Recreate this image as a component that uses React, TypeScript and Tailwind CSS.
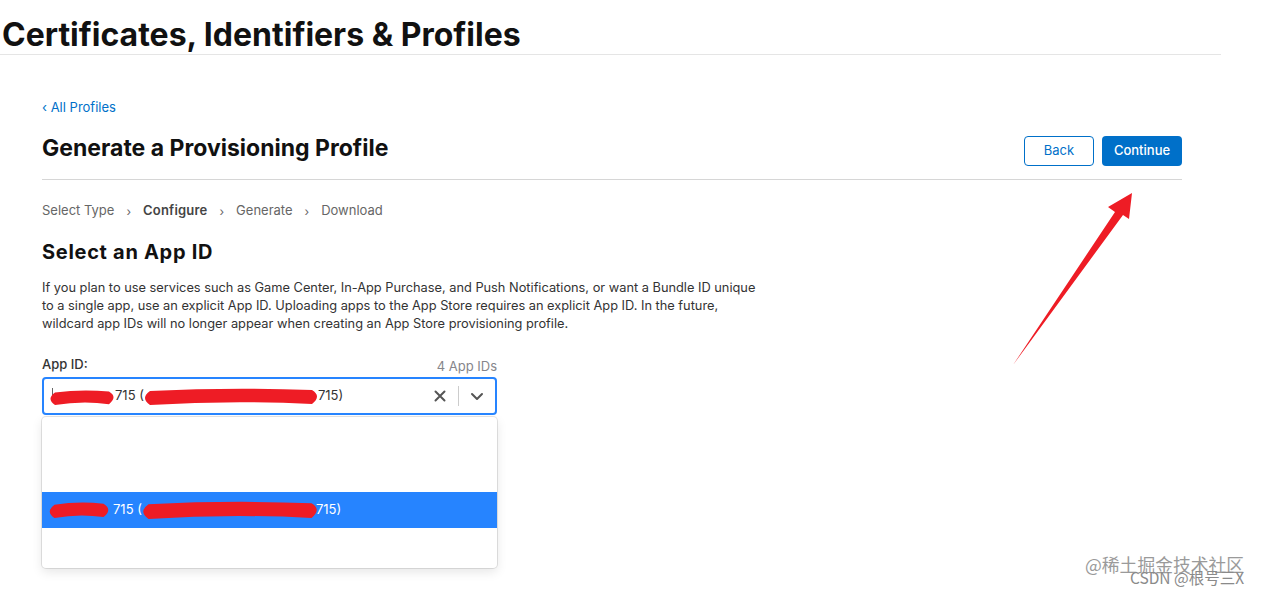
import React from "react";

const Blob = ({ className, w, h }: { className: string; w: number; h: number }) => (
  <svg className={className} width={w} height={h} viewBox={`0 0 ${w} ${h}`}>
    <path
      d={`M${h / 2} ${h * 0.25} Q${w * 0.5} ${h * 0.05} ${w - h / 2} ${h * 0.2} Q${w} ${h * 0.5} ${w - h / 2} ${h * 0.9} Q${w * 0.5} ${h * 0.7} ${h / 2} ${h * 0.95} Q0 ${h * 0.6} ${h / 2} ${h * 0.25} Z`}
      fill="#ee1c25"
    />
  </svg>
);

export default function App() {
  return (
    <div className="relative w-[1263px] h-[594px] bg-white overflow-hidden font-['Inter',sans-serif] text-[#1d1d1f]">
      <div className="w-[1221px] border-b border-[#e5e5e5] pl-[2px] pt-[16px] pb-[0px]">
        <h1 className="text-[32px] leading-[38px] font-bold text-[#111]">
          Certificates, Identifiers &amp; Profiles
        </h1>
      </div>

      <div className="ml-[42px] w-[1140px] pt-[44px]">
        <a className="block text-[13px] leading-[16px] text-[#0070c9]">‹ All Profiles</a>
        <div className="flex items-center justify-between mt-[14px] pb-[13px] border-b border-[#d6d6d6]">
          <h2 className="text-[23px] leading-[30px] font-bold text-[#111]">Generate a Provisioning Profile</h2>
          <div className="flex gap-[8px] mt-[7px]">
            <button className="w-[70px] h-[30px] rounded-[4px] border border-[#0070c9] text-[13px] text-[#0070c9] bg-white">
              Back
            </button>
            <button className="w-[80px] h-[30px] rounded-[4px] bg-[#0070c9] text-[13px] font-medium text-white">
              Continue
            </button>
          </div>
        </div>

        <div className="flex items-center mt-[22px] text-[13px] leading-[16px] text-[#666]">
          <span>Select Type</span>
          <span className="mx-[12px] text-[12px] translate-y-[2px]">›</span>
          <span className="font-semibold text-[#444] tracking-[0.2px]">Configure</span>
          <span className="mx-[12px] text-[12px] translate-y-[2px]">›</span>
          <span>Generate</span>
          <span className="mx-[12px] text-[12px] translate-y-[2px]">›</span>
          <span>Download</span>
        </div>

        <h3 className="mt-[21px] text-[20px] leading-[26px] font-bold tracking-[0.7px] text-[#111]">Select an App ID</h3>

        <p className="mt-[14px] w-[716px] text-[12.8px] leading-[18px] text-[#333]">
          If you plan to use services such as Game Center, In-App Purchase, and Push Notifications, or want a Bundle ID unique to
          a single app, use an explicit App ID. Uploading apps to the App Store requires an explicit App ID. In the future,
          wildcard app IDs will no longer appear when creating an App Store provisioning profile.
        </p>

        <div className="w-[455px] mt-[23px]">
          <div className="flex items-end justify-between text-[13px] leading-[16px]">
            <span className="font-medium text-[#333]">App ID:</span>
            <span className="text-[#86868b] translate-y-[2px]">4 App IDs</span>
          </div>
          <div className="relative mt-[5px] h-[38px] rounded-[4px] border-2 border-[#2684ff] flex items-center">
            <div className="flex-1 relative h-full flex items-center text-[13px] text-[#333]">
              <span className="absolute left-[8px] top-[9px] w-px h-[12px] bg-[#666]" />
              <span className="pl-[71px]">715 (</span>
              <span className="w-[174px]" />
              <span>715)</span>
              <Blob className="absolute left-[2px] top-[9px]" w={72} h={18} />
              <Blob className="absolute left-[96px] top-[7px]" w={182} h={20} />
            </div>
            <div className="flex items-center h-full">
              <svg width="20" height="20" viewBox="0 0 20 20" className="mr-[8px]">
                <path d="M5.5 5.5 L14.5 14.5 M14.5 5.5 L5.5 14.5" stroke="#555" strokeWidth="2" strokeLinecap="round" />
              </svg>
              <span className="w-px h-[20px] bg-[#ccc]" />
              <svg width="20" height="20" viewBox="0 0 20 20" className="mx-[8px]">
                <path d="M5 8 L10 13 L15 8" stroke="#555" strokeWidth="2" fill="none" strokeLinecap="round" strokeLinejoin="round" />
              </svg>
            </div>
          </div>
          <div className="mt-[2px] h-[151px] rounded-[4px] bg-white shadow-[0_0_0_1px_rgba(0,0,0,0.1),0_4px_11px_rgba(0,0,0,0.1)] py-[3px] flex flex-col">
            <div className="h-[36px]" />
            <div className="h-[36px]" />
            <div className="relative h-[36px] bg-[#2684ff] flex items-center text-[13px] text-white">
              <span className="pl-[71px]">715 (</span>
              <span className="w-[174px]" />
              <span>715)</span>
              <Blob className="absolute left-[3px] top-[8px]" w={68} h={19} />
              <Blob className="absolute left-[96px] top-[7px]" w={184} h={21} />
            </div>
            <div className="h-[36px]" />
          </div>
        </div>
      </div>

      <svg className="absolute left-[1005px] top-[185px]" width="135" height="185" viewBox="0 0 135 185">
        <path d="M8 180 L110 27 L103 22 L127 8 L124 34 L118 30 Z" fill="#ee1c25" />
      </svg>

      <div className="absolute left-[1085px] top-[554px] text-[17.8px] leading-[20px] text-[#9a9a9a] font-['Noto_Sans_CJK_SC',sans-serif]">
        @稀土掘金技术社区
      </div>
      <div className="absolute left-[1130px] top-[569px] text-[15.5px] leading-[16px] text-[#8a8a8a] font-['Noto_Sans_CJK_SC',sans-serif]">
        CSDN @根号三X
      </div>
    </div>
  );
}
